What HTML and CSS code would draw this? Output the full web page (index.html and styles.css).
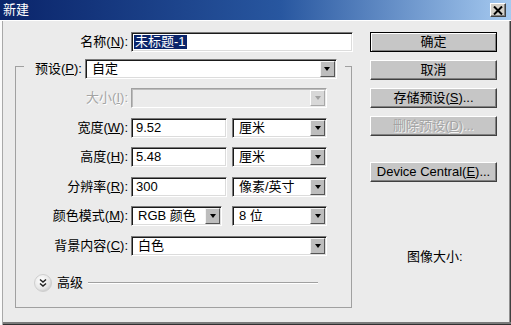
FILE: index.html
```html
<!DOCTYPE html>
<html lang="zh-CN">
<head>
    <meta charset="UTF-8">
    <meta name="viewport" content="width=device-width, initial-scale=1.0">
    <title>新建</title>
    <link rel="stylesheet" href="styles.css">
</head>
<body>
    <div class="window">
        <div class="titlebar">
            <span class="title">新建</span>
            <span class="close">
                <svg width="10" height="9" viewBox="0 0 10 9">
                    <path d="M1 0.5 L9 8.5 M9 0.5 L1 8.5" stroke="#000" stroke-width="2" fill="none"/>
                </svg>
            </span>
        </div>

        <div class="content">
            <div class="main">
                <div class="row name-row">
                    <span class="label name-label">名称(<u>N</u>):</span>
                    <div class="field name-field"><span class="selected">未标题-1</span></div>
                </div>

                <fieldset class="group">
                    <legend class="preset">
                        <span class="preset-label">预设(<u>P</u>):</span>
                        <div class="select preset-select"><span class="value">自定</span><span class="arrow"></span></div>
                    </legend>

                    <div class="rows">
                        <div class="row">
                            <span class="label disabled">大小(<u>I</u>):</span>
                            <div class="select wide is-disabled"><span class="value"></span><span class="arrow"></span></div>
                        </div>
                        <div class="row">
                            <span class="label">宽度(<u>W</u>):</span>
                            <div class="field num">9.52</div>
                            <div class="select unit"><span class="value">厘米</span><span class="arrow"></span></div>
                        </div>
                        <div class="row">
                            <span class="label">高度(<u>H</u>):</span>
                            <div class="field num">5.48</div>
                            <div class="select unit"><span class="value">厘米</span><span class="arrow"></span></div>
                        </div>
                        <div class="row">
                            <span class="label">分辨率(<u>R</u>):</span>
                            <div class="field num">300</div>
                            <div class="select unit"><span class="value">像素/英寸</span><span class="arrow"></span></div>
                        </div>
                        <div class="row">
                            <span class="label">颜色模式(<u>M</u>):</span>
                            <div class="select mode"><span class="value">RGB 颜色</span><span class="arrow"></span></div>
                            <div class="select depth"><span class="value">8 位</span><span class="arrow"></span></div>
                        </div>
                        <div class="row">
                            <span class="label">背景内容(<u>C</u>):</span>
                            <div class="select wide"><span class="value">白色</span><span class="arrow"></span></div>
                        </div>
                    </div>

                    <div class="advanced">
                        <svg class="adv-icon" width="20" height="20" viewBox="0 0 20 20">
                            <defs>
                                <radialGradient id="advFill" cx="40%" cy="35%" r="70%">
                                    <stop offset="0" stop-color="#ffffff"/>
                                    <stop offset="0.7" stop-color="#e6e6e6"/>
                                    <stop offset="1" stop-color="#c4c4c4"/>
                                </radialGradient>
                            </defs>
                            <circle cx="10" cy="10" r="8.5" fill="url(#advFill)" stroke="#cfcfcf"/>
                            <path d="M7 6.5 L10 9 L13 6.5 M7 10.5 L10 13 L13 10.5" stroke="#222" stroke-width="1.5" fill="none"/>
                        </svg>
                        <span class="adv-text">高级</span>
                        <span class="adv-line"></span>
                    </div>
                </fieldset>
            </div>

            <div class="side">
                <div class="btn default">确定</div>
                <div class="btn">取消</div>
                <div class="btn">存储预设(<u>S</u>)...</div>
                <div class="btn disabled">删除预设(<u>D</u>)...</div>
                <div class="btn device">Device Central(<u>E</u>)...</div>
                <p class="image-size">图像大小:</p>
            </div>
        </div>
    </div>
</body>
</html>
```

FILE: styles.css
```css
body {
    margin: 0;
    font-family: "Liberation Sans", "Noto Sans CJK SC", sans-serif;
    font-size: 13px;
    line-height: 16px;
    color: #000;
}
.window {
    width: 511px;
    height: 325px;
    box-sizing: border-box;
    background-color: #ebebeb;
    display: flex;
    flex-direction: column;
    box-shadow: inset 2px 0 #fafafa, inset 3px 0 #a8a8a8,
        inset 0 -1px #303030, inset 0 -3px #7a7a7a,
        inset -1px 0 #404040, inset -2px 0 #909090;
}
.titlebar {
    height: 20px;
    flex-shrink: 0;
    background: linear-gradient(to right, #0a246a 0%, #2857a0 55%, #a6caf0 100%);
    display: flex;
    align-items: center;
    justify-content: space-between;
    padding: 0 5px 0 3px;
}
.title {
    color: #fff;
}
.close {
    width: 16px;
    height: 14px;
    box-sizing: border-box;
    background-color: #d4d0c8;
    border: 1px solid;
    border-color: #fff #404040 #404040 #fff;
    box-shadow: inset -1px -1px #808080;
    display: flex;
    align-items: center;
    justify-content: center;
}
.content {
    flex: 1;
    display: flex;
    padding-top: 12px;
    box-shadow: inset 0 1px #fff;
}
.main {
    width: 353px;
    flex-shrink: 0;
}
.row {
    display: flex;
    align-items: center;
    height: 20px;
}
.label {
    width: 112px;
    text-align: right;
    margin-right: 3px;
    white-space: nowrap;
}
.name-label {
    width: 128px;
}
.label.disabled {
    color: #a4a4a4;
    text-shadow: 1px 1px #fff;
}

/* text fields */
.field {
    height: 20px;
    box-sizing: border-box;
    background-color: #fff;
    border: 1px solid;
    border-color: #7a7a7a #fff #fff #7a7a7a;
    box-shadow: inset 1px 1px #1a1a1a, inset -1px -1px #dcdcdc;
    padding: 1px 3px;
    display: flex;
    align-items: center;
    white-space: nowrap;
}
.name-field {
    width: 222px;
    padding-left: 2px;
}
.selected {
    background-color: #0a246a;
    color: #fff;
    padding: 0 1px;
    line-height: 14px;
}
.num {
    width: 96px;
    padding-left: 4px;
}

/* dropdowns */
.select {
    height: 20px;
    box-sizing: border-box;
    background-color: #fff;
    border: 1px solid;
    border-color: #7a7a7a #fff #fff #7a7a7a;
    box-shadow: inset 1px 1px #1a1a1a, inset -1px -1px #dcdcdc;
    padding: 1px 1px 1px 1px;
    display: flex;
    white-space: nowrap;
}
.select .value {
    flex: 1;
    padding-left: 5px;
    display: flex;
    align-items: center;
}
.select .arrow {
    width: 15px;
    box-sizing: border-box;
    background-color: #bdbdbd;
    border: 1px solid;
    border-color: #f4f4f4 #555 #555 #f4f4f4;
    display: flex;
    align-items: center;
    justify-content: center;
}
.select .arrow::after {
    content: "";
    border-style: solid;
    border-width: 4px 3px 0;
    border-color: #000 transparent transparent;
}
.select.is-disabled {
    background-color: #ebebeb;
    border-color: #a0a0a0 #fff #fff #a0a0a0;
    box-shadow: inset 1px 1px #bcbcbc;
}
.select.is-disabled .arrow {
    background-color: #d8d8d8;
    border-color: #fff #a8a8a8 #a8a8a8 #fff;
}
.select.is-disabled .arrow::after {
    border-top-color: #a0a0a0;
}
.wide {
    width: 196px;
}
.unit {
    width: 95px;
    margin-left: 5px;
}
.mode {
    width: 91px;
}
.depth {
    width: 95px;
    margin-left: 10px;
}

/* preset group */
.group {
    margin: 7px 0 0 15px;
    padding: 0 0 14px;
    width: 337px;
    box-sizing: border-box;
    border: 1px solid #a0a0a0;
    min-inline-size: 0;
}
.preset {
    display: flex;
    height: 14px;
    align-items: flex-start;
    margin-left: 8px;
    padding: 0 7px 0 11px;
    width: 321px;
    box-sizing: border-box;
}
.preset-label {
    height: 20px;
    display: flex;
    align-items: center;
    margin-right: 3px;
    white-space: nowrap;
}
.preset-select {
    width: 252px;
    flex-shrink: 0;
}
.rows {
    padding-top: 15px;
    display: flex;
    flex-direction: column;
    gap: 9.5px;
}
.advanced {
    display: flex;
    align-items: center;
    height: 20px;
    margin-top: 17.5px;
    padding-left: 17px;
    padding-right: 33px;
}
.adv-icon {
    flex-shrink: 0;
}
.adv-text {
    margin-left: 4px;
    margin-right: 5px;
}
.adv-line {
    flex: 1;
    border-top: 1px solid #a0a0a0;
    border-bottom: 1px solid #fff;
}

/* buttons */
.side {
    width: 127px;
    margin-left: 17px;
    display: flex;
    flex-direction: column;
    gap: 8px;
}
.btn {
    height: 20px;
    box-sizing: border-box;
    background-color: #c6c6c6;
    border: 1px solid;
    border-color: #fff #404040 #404040 #fff;
    box-shadow: inset -1px -1px #808080;
    display: flex;
    align-items: center;
    justify-content: center;
    white-space: nowrap;
}
.btn.default {
    border-color: #000;
    box-shadow: inset 1px 1px #fff, inset -1px -1px #808080;
}
.btn.disabled {
    color: #a4a4a4;
    text-shadow: 1px 1px #f4f4f4;
}
.btn.device {
    margin-top: 18px;
}
.image-size {
    margin: 59px 0 0 37px;
}
```
